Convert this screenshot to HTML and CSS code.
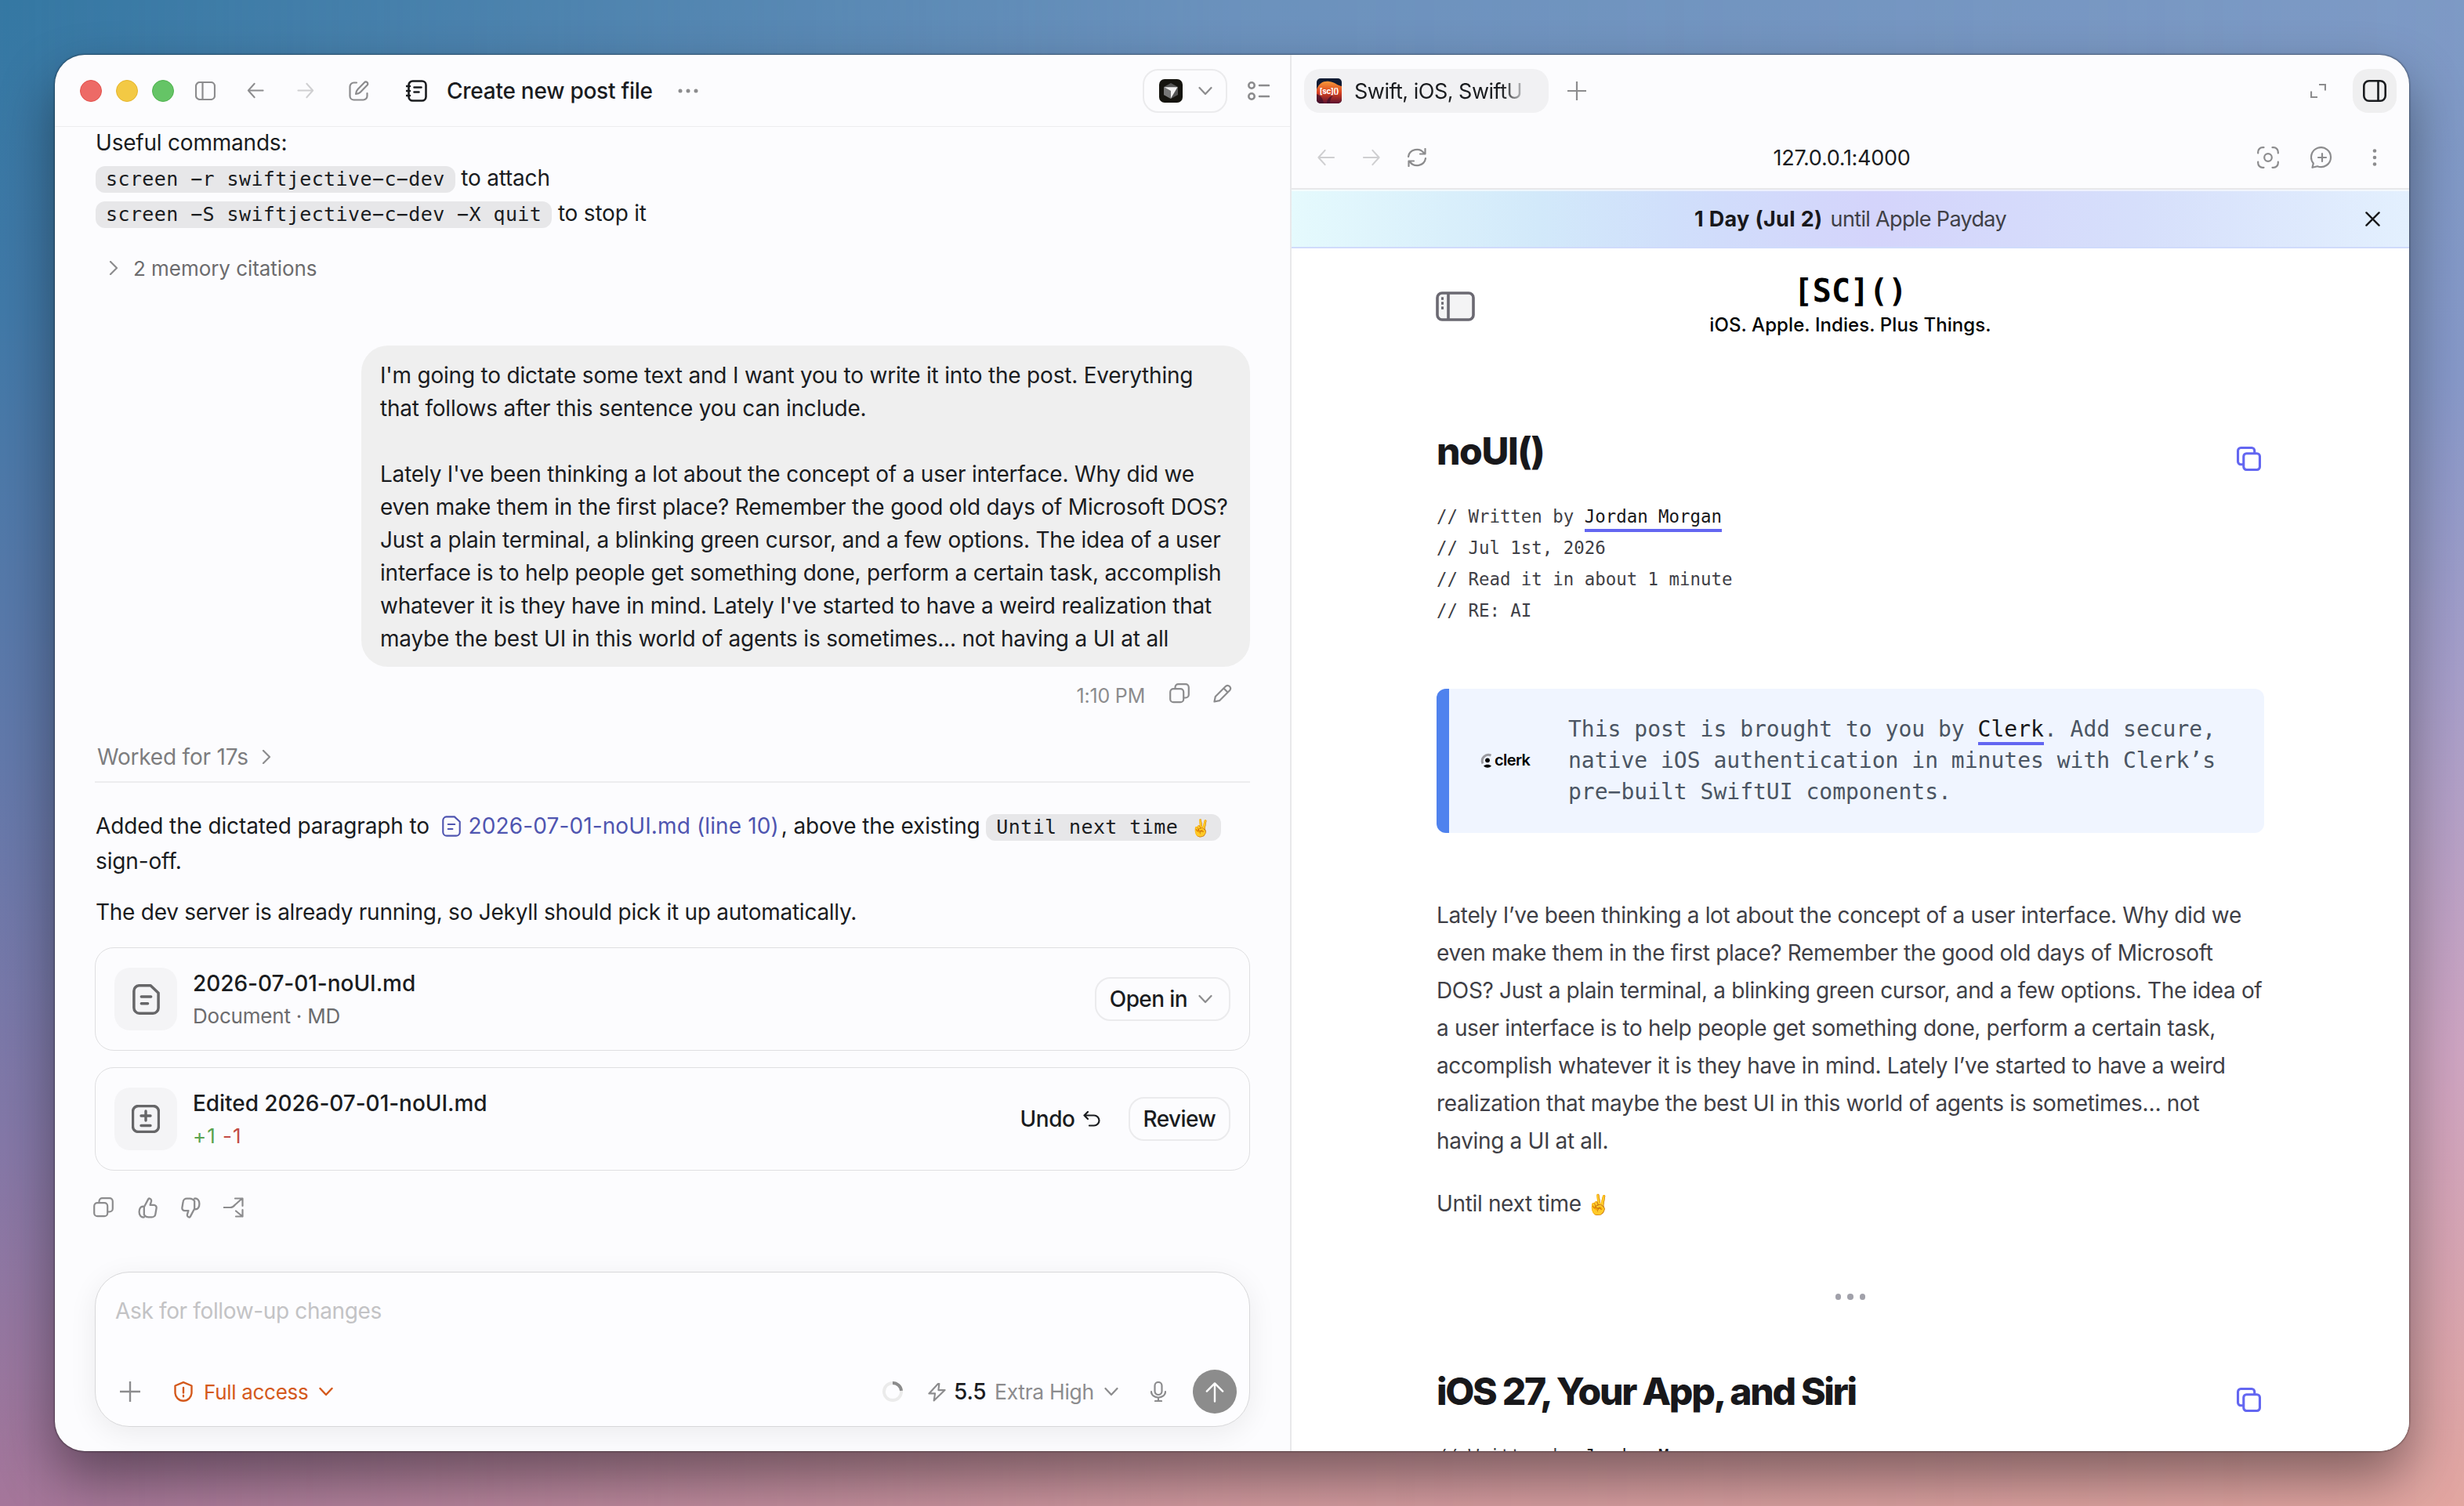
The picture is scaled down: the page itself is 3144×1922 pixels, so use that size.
FILE: index.html
```html
<!DOCTYPE html>
<html lang="en">
<head>
    <meta charset="UTF-8">
    <meta name="viewport" content="width=device-width, initial-scale=1.0">
    <title>Create new post file</title>
    <link rel="stylesheet" href="styles.css">
</head>
<body>
    <!-- Shared icons -->
    <svg class="sprite">
        <symbol id="arrow-left" viewBox="0 0 24 24"><path d="M23 12H1.5M10.5 2L1.5 12l9 10"/></symbol>
        <symbol id="arrow-right" viewBox="0 0 24 24"><path d="M1 12h21.5M13.5 2l9 10-9 10"/></symbol>
        <symbol id="chevron-down" viewBox="0 0 18 18"><path d="M1.5 5L9 13l7.5-8"/></symbol>
        <symbol id="chevron-right" viewBox="0 0 18 18"><path d="M5 1l8 8-8 8"/></symbol>
        <symbol id="plus" viewBox="0 0 24 24"><path d="M12 0v24M0 12h24"/></symbol>
        <symbol id="copy" viewBox="0 0 26 26"><rect x="1.2" y="7.2" width="17" height="17" rx="4"/><path d="M7.5 7V5.2a4 4 0 0 1 4-4h9.300a4 4 0 0 1 4 4v9.300a4 4 0 0 1-4 4h-2.300"/></symbol>
        <symbol id="copy-post" viewBox="0 0 30 30"><rect x="8.500" y="8.500" width="20" height="20" rx="3.500"/><path d="M8 22H5a3.500 3.500 0 0 1-3.500-3.500V5A3.500 3.500 0 0 1 5 1.500h13.500A3.500 3.500 0 0 1 22 5v3"/></symbol>
        <symbol id="doc" viewBox="0 0 34 38"><path d="M8 1.800h14.500l9.700 9.200V29.500a6.700 6.700 0 0 1-6.700 6.700h-17a6.700 6.700 0 0 1-6.700-6.700V8.500A6.700 6.700 0 0 1 8 1.800zM11 15.500h12M11 24h8"/></symbol>
    </svg>

    <div class="window">
        <!-- Chat pane -->
        <section class="chat">
            <header class="chat-header">
                <div class="lights">
                    <span class="light red"></span>
                    <span class="light yellow"></span>
                    <span class="light green"></span>
                </div>
                <svg class="icon i-sidebar" viewBox="0 0 26 24"><rect x="1" y="1" width="24" height="22" rx="5"/><path d="M9.500 1v22"/></svg>
                <svg class="icon i-back"><use href="#arrow-left"/></svg>
                <svg class="icon i-forward faint"><use href="#arrow-right"/></svg>
                <svg class="icon i-compose" viewBox="0 0 26 26"><path d="M10 2.500H6.500a5 5 0 0 0-5 5v12a5 5 0 0 0 5 5h12a5 5 0 0 0 5-5V16M9 17c.3-3 1-4.500 2.500-6L20 2.300a2.400 2.400 0 0 1 3.700 3.200L15 14.500c-1.700 1.700-3 2.200-6 2.500z"/></svg>
                <svg class="icon i-notebook" viewBox="0 0 27 28"><rect x="3.500" y="1.500" width="22" height="25" rx="5"/><path d="M0 8h5M0 14h5M0 20h5M10.500 9.500h9M10.500 15.500h6"/></svg>
                <h1 class="chat-title">Create new post file</h1>
                <svg class="i-more" viewBox="0 0 26 6"><circle cx="3" cy="3" r="2.500"/><circle cx="13" cy="3" r="2.500"/><circle cx="23" cy="3" r="2.500"/></svg>
                <button class="app-picker">
                    <svg class="i-app" viewBox="0 0 30 30">
                        <rect width="30" height="30" rx="7" fill="#15140f"/>
                        <path d="M15 5l9 5v10l-9 5-9-5V10z" fill="#555"/>
                        <path d="M15 15L6 10v10l9 5z" fill="#777"/>
                        <path d="M6.500 10.300h17L15 24.500V15z" fill="#f2f2f2"/>
                    </svg>
                    <svg class="icon i-chevron"><use href="#chevron-down"/></svg>
                </button>
                <svg class="icon i-list" viewBox="0 0 28 24"><circle cx="5" cy="5" r="3.700"/><circle cx="5" cy="19" r="3.700"/><path d="M15 5h12M15 19h12"/></svg>
            </header>

            <div class="thread">
                <p class="text commands">Useful commands:<br><code>screen −r swiftjective−c−dev</code> to attach<br><code>screen −S swiftjective−c−dev −X quit</code> to stop it</p>

                <div class="citations">
                    <svg class="icon i-chevron"><use href="#chevron-right"/></svg>
                    <span>2 memory citations</span>
                </div>

                <div class="bubble">I'm going to dictate some text and I want you to write it into the post. Everything<br>that follows after this sentence you can include.<br><br>Lately I've been thinking a lot about the concept of a user interface. Why did we<br>even make them in the first place? Remember the good old days of Microsoft DOS?<br>Just a plain terminal, a blinking green cursor, and a few options. The idea of a user<br>interface is to help people get something done, perform a certain task, accomplish<br>whatever it is they have in mind. Lately I've started to have a weird realization that<br>maybe the best UI in this world of agents is sometimes... not having a UI at all</div>

                <div class="bubble-meta">
                    <span>1:10 PM</span>
                    <svg class="icon i-copy"><use href="#copy"/></svg>
                    <svg class="icon i-pencil" viewBox="0 0 24 24"><path d="M1.500 22.500l1.300-6.500L16 2.800a3.700 3.700 0 0 1 5.200 5.200L8 21.200zM13.500 5.500l5 5"/></svg>
                </div>

                <div class="worked">
                    <span>Worked for 17s</span>
                    <svg class="icon i-chevron"><use href="#chevron-right"/></svg>
                </div>

                <p class="text reply">Added the dictated paragraph to <a class="file-link" href="#"><svg class="icon i-doc-small"><use href="#doc"/></svg>2026-07-01-noUI.md (line 10)</a>, above the existing <code>Until next time <span class="emoji">✌️</span></code><br>sign-off.</p>
                <p class="text reply-2">The dev server is already running, so Jekyll should pick it up automatically.</p>

                <article class="card">
                    <div class="tile"><svg class="icon i-doc"><use href="#doc"/></svg></div>
                    <div class="card-body">
                        <h3>2026-07-01-noUI.md</h3>
                        <p>Document · MD</p>
                    </div>
                    <button class="pill">Open in <svg class="icon i-chevron"><use href="#chevron-down"/></svg></button>
                </article>

                <article class="card card-2">
                    <div class="tile"><svg class="icon i-diff" viewBox="0 0 36 36"><rect x="1.500" y="1.500" width="33" height="33" rx="7"/><path d="M18 8v12M12 14h12M12 26.500h12"/></svg></div>
                    <div class="card-body">
                        <h3>Edited 2026-07-01-noUI.md</h3>
                        <p class="diff"><span class="added">+1</span> <span class="removed">-1</span></p>
                    </div>
                    <button class="undo">Undo <svg class="icon i-undo" viewBox="0 0 22 20"><path d="M6 1L1.500 5.500 6 10M1.500 5.500H14a6.500 6.500 0 0 1 0 13H8"/></svg></button>
                    <button class="pill">Review</button>
                </article>

                <div class="actions">
                    <svg class="icon i-copy"><use href="#copy"/></svg>
                    <svg class="icon i-thumb" viewBox="0 0 24 26"><path d="M7.500 12L12.500 2.500c.3-.8 1-1.200 1.800-1 1.700.4 2.500 1.900 2 3.700L15 9.500h4.500a3.200 3.200 0 0 1 3.200 3.700l-1.200 7.300a4.500 4.500 0 0 1-4.500 4h-4c-3 0-4-1-5.500-3zM7.500 11.500c-4-1-6 2-6 6.500s2.500 7 6 6.500"/></svg>
                    <svg class="icon i-thumb down" viewBox="0 0 24 26"><path d="M7.500 12L12.500 2.500c.3-.8 1-1.200 1.800-1 1.700.4 2.500 1.900 2 3.700L15 9.500h4.500a3.200 3.200 0 0 1 3.200 3.700l-1.200 7.300a4.500 4.500 0 0 1-4.500 4h-4c-3 0-4-1-5.500-3zM7.500 11.500c-4-1-6 2-6 6.500s2.500 7 6 6.500"/></svg>
                    <svg class="icon i-branch" viewBox="0 0 26 26"><path d="M0 13h9c3 0 4-1 6-3.500L24 1.500M15 1.500h9.500V11M16 17.500l8.500 7M24.500 16v8.500H16"/></svg>
                </div>

                <!-- Composer -->
                <div class="composer">
                    <div class="placeholder">Ask for follow-up changes</div>
                    <div class="composer-bar">
                        <svg class="icon i-plus"><use href="#plus"/></svg>
                        <span class="access">
                            <svg class="icon i-shield" viewBox="0 0 24 26"><path d="M12 1.200l10.500 4.300v8.500c0 6-4.500 10.800-10.500 10.800S1.500 20 1.500 14V5.500zM12 8v6.500M12 18v1.200"/></svg>
                            Full access
                            <svg class="icon i-chevron"><use href="#chevron-down"/></svg>
                        </span>
                        <svg class="spinner" viewBox="0 0 24 24"><circle cx="12" cy="12" r="10.200" stroke="#ebebeb"/><path d="M12 1.800A10.200 10.200 0 0 1 22.200 11" stroke="#8c8c8c"/></svg>
                        <svg class="icon i-bolt" viewBox="0 0 24 24"><path d="M13.500 1L1.500 14h8l-1.500 9.500L22.500 9.500h-8.500L15 1z"/></svg>
                        <span class="model">5.5</span>
                        <span class="effort">Extra High</span>
                        <svg class="icon i-chevron model-chevron"><use href="#chevron-down"/></svg>
                        <svg class="icon i-mic" viewBox="0 0 20 26"><rect x="5.500" y="1" width="9" height="16" rx="4.500"/><path d="M1 13c0 4.500 4 7.500 9 7.500s9-3 9-7.500M10 20.500V25M6 25h8"/></svg>
                        <button class="send"><svg class="icon i-send" viewBox="0 0 26 28"><path d="M13 27V2M2 13L13 2l11 11"/></svg></button>
                    </div>
                </div>
            </div>
        </section>

        <!-- Browser pane -->
        <section class="browser">
            <header class="tabs">
                <div class="tab">
                    <svg class="favicon" viewBox="0 0 32 32">
                        <defs>
                            <linearGradient id="fire" x1="0" y1="0" x2="0" y2="1"><stop offset="0" stop-color="#f79a3a"/><stop offset=".5" stop-color="#d9401f"/><stop offset="1" stop-color="#5d1230"/></linearGradient>
                            <clipPath id="round"><rect width="32" height="32" rx="5"/></clipPath>
                        </defs>
                        <g clip-path="url(#round)">
                            <rect width="32" height="32" fill="#101b33"/>
                            <path d="M0 14C3 6 9 3 16 4c8 1 10 5 16 6v22H0z" fill="url(#fire)"/>
                            <path d="M0 20c6 2 8 6 9 12H0zM13 32c0-5 3-9 8-10-3 3-4 6-4 10z" fill="#3a0f2c" opacity=".7"/>
                        </g>
                        <text x="16" y="20" text-anchor="middle">[sc]()</text>
                    </svg>
                    <span class="tab-title">Swift, iOS, SwiftU</span>
                </div>
                <svg class="icon i-newtab"><use href="#plus"/></svg>
                <svg class="icon i-expand" viewBox="0 0 20 18"><path d="M11 1h8v7.500M1 9.500V17h8"/></svg>
                <button class="panel-btn"><svg class="icon i-panel" viewBox="0 0 30 28"><rect x="1.300" y="1.300" width="27.400" height="25.400" rx="6.500"/><path d="M19.500 1.500v25"/></svg></button>
            </header>

            <div class="toolbar">
                <div class="nav">
                    <svg class="icon i-nav faint"><use href="#arrow-left"/></svg>
                    <svg class="icon i-nav faint"><use href="#arrow-right"/></svg>
                    <svg class="icon i-reload" viewBox="0 0 24 24"><path d="M1 11A11 10.500 0 0 1 21 6.500M23 13A11 10.500 0 0 1 3 17.500M22.500 1v6.500H16M1.500 23v-6.500H8"/></svg>
                </div>
                <div class="url">127.0.0.1:4000</div>
                <div class="tools">
                    <svg class="icon i-capture" viewBox="0 0 28 28"><path d="M1.200 8.500V7a5.800 5.800 0 0 1 5.800-5.800h1.500M19.500 1.200H21A5.800 5.800 0 0 1 26.800 7v1.500M26.800 19.500V21a5.800 5.800 0 0 1-5.800 5.800h-1.500M8.500 26.800H7A5.800 5.800 0 0 1 1.200 21v-1.500"/><circle cx="14" cy="14" r="4.800"/></svg>
                    <svg class="icon i-comment" viewBox="0 0 30 28"><path d="M2.500 26.800l1.300-5.300A12.500 12.500 0 1 1 9 25.300zM15 9v10M10 14h10"/></svg>
                    <svg class="i-kebab" viewBox="0 0 6 22"><circle cx="3" cy="2.500" r="2.300"/><circle cx="3" cy="11" r="2.300"/><circle cx="3" cy="19.500" r="2.300"/></svg>
                </div>
            </div>

            <div class="banner">
                <span class="banner-text"><b>1 Day (Jul 2)</b><span class="until">until Apple Payday</span></span>
                <svg class="icon i-close" viewBox="0 0 20 20"><path d="M1.500 1.500l17 17M18.500 1.500l-17 17"/></svg>
            </div>

            <main class="site">
                <header class="site-header">
                    <svg class="i-menu" viewBox="0 0 50 38"><rect x="2" y="2" width="46" height="34" rx="6" fill="#f4f4f5"/><path d="M16 2v34M7 9h3M7 15h3M7 21h3"/></svg>
                    <div class="brand">
                        <div class="logo">[SC]()</div>
                        <div class="tagline">iOS. Apple. Indies. Plus Things.</div>
                    </div>
                </header>

                <article class="post">
                    <div class="post-head">
                        <h2>noUI()</h2>
                        <svg class="i-copy-post"><use href="#copy-post"/></svg>
                    </div>
                    <div class="meta">// Written by <a href="#">Jordan Morgan</a><br>// Jul 1st, 2026<br>// Read it in about 1 minute<br>// RE: AI</div>

                    <aside class="sponsor">
                        <svg class="clerk" viewBox="0 0 64 20">
                            <path d="M13.500 3.200A7.800 7.800 0 0 0 3 13.500" fill="none" stroke="#9a9aa0" stroke-width="3"/>
                            <circle cx="9" cy="9.300" r="2.900"/>
                            <path d="M4 16.500c3-2.500 7-2.500 10 0-3 3-7 3-10 0z"/>
                            <text x="18" y="16" textLength="46">clerk</text>
                        </svg>
                        <p>This post is brought to you by <a href="#">Clerk</a>. Add secure,<br>native iOS authentication in minutes with Clerk’s<br>pre−built SwiftUI components.</p>
                    </aside>

                    <p class="body-text">Lately I’ve been thinking a lot about the concept of a user interface. Why did we<br>even make them in the first place? Remember the good old days of Microsoft<br>DOS? Just a plain terminal, a blinking green cursor, and a few options. The idea of<br>a user interface is to help people get something done, perform a certain task,<br>accomplish whatever it is they have in mind. Lately I’ve started to have a weird<br>realization that maybe the best UI in this world of agents is sometimes… not<br>having a UI at all.</p>
                    <p class="body-text sign-off">Until next time <span class="emoji">✌️</span></p>
                </article>

                <div class="dots"><span></span><span></span><span></span></div>

                <article class="post-next">
                    <div class="post-head">
                        <h2 class="long">iOS 27, Your App, and Siri</h2>
                        <svg class="i-copy-post"><use href="#copy-post"/></svg>
                    </div>
                    <div class="meta">// Written by <a href="#">Jordan Morgan</a></div>
                </article>
            </main>
        </section>
    </div>
</body>
</html>
```
FILE: styles.css
```css
* {
    box-sizing: border-box;
}

body {
    margin: 0;
    width: 3144px;
    height: 1922px;
    padding: 70px;
    overflow: hidden;
    position: relative;
    font-family: Inter, "Liberation Sans", sans-serif;
    font-size: 28px;
    color: #1a1c1f;
    background: linear-gradient(180deg, #3578a3 0%, #4079a8 20%, #6279ab 50%, #8578a8 76%, #a5769a 100%);
}

/* Second vertical gradient, faded in towards the right */
body::before {
    content: "";
    position: absolute;
    inset: 0;
    background: linear-gradient(180deg, #7d9ac5 0%, #8799c9 25%, #a79fca 45%, #cfa5c2 70%, #e2a6a0 100%);
    -webkit-mask-image: linear-gradient(90deg, transparent 0%, rgba(0, 0, 0, 0.75) 50%, #000 100%);
    mask-image: linear-gradient(90deg, transparent 0%, rgba(0, 0, 0, 0.75) 50%, #000 100%);
}

h1, h2, h3, p {
    margin: 0;
    font-size: inherit;
    font-weight: 400;
}

button {
    font: inherit;
    color: inherit;
    letter-spacing: inherit;
    background: none;
    border: none;
    padding: 0;
}

a {
    color: inherit;
    text-decoration: none;
}

svg {
    flex: none;
    display: block;
}

.sprite {
    display: none;
}

.icon {
    fill: none;
    stroke: #8c8c8e;
    stroke-width: 2.2;
    stroke-linecap: round;
    stroke-linejoin: round;
}

.faint {
    stroke: #cfcfd1;
}

.i-chevron {
    width: 18px;
    height: 18px;
}

.window {
    position: relative;
    display: flex;
    width: 3004px;
    height: 1782px;
    border-radius: 38px;
    overflow: hidden;
    background: #fcfcfe;
    box-shadow: 0 0 2px 1px rgba(0, 0, 0, 0.35), 0 34px 70px rgba(0, 0, 0, 0.42);
}

/* ---------- Chat pane ---------- */
.chat {
    width: 1578px;
    display: flex;
    flex-direction: column;
    border-right: 2px solid #e8e8ea;
    white-space: nowrap;
    letter-spacing: -0.21px;
}

.chat-header {
    display: flex;
    align-items: center;
    height: 92px;
    padding-left: 32px;
    border-bottom: 1px solid #ededef;
}

.lights {
    display: flex;
    gap: 18px;
}

.light {
    width: 28px;
    height: 28px;
    border-radius: 50%;
}

.red {
    background: #ed6a66;
    border: 1px solid #e2504c;
}

.yellow {
    background: #f3c944;
    border: 1px solid #e5b52d;
}

.green {
    background: #65c466;
    border: 1px solid #4fb24f;
}

.i-sidebar {
    width: 26px;
    height: 24px;
    margin-left: 27px;
}

.i-back {
    width: 24px;
    height: 21px;
    margin-left: 39px;
}

.i-forward {
    width: 24px;
    height: 21px;
    margin-left: 40px;
}

.i-compose {
    width: 26px;
    height: 26px;
    margin-left: 43px;
}

.i-notebook {
    width: 27px;
    height: 28px;
    margin-left: 47px;
    stroke: #1a1c1f;
    stroke-width: 2.6;
}

.chat-title {
    width: 264px;
    margin-left: 25px;
    font-weight: 500;
    letter-spacing: -0.25px;
}

.i-more {
    width: 26px;
    height: 6px;
    margin-left: 31px;
    fill: #8c8c8e;
}

.app-picker {
    display: flex;
    align-items: center;
    gap: 20px;
    width: 108px;
    height: 56px;
    margin-left: auto;
    padding-left: 19px;
    border: 2px solid #ebebed;
    border-radius: 20px;
}

.i-app {
    width: 30px;
    height: 30px;
}

.i-list {
    width: 28px;
    height: 24px;
    margin: 0 26px;
    stroke-width: 2.6;
}

.thread {
    flex: 1;
    display: flex;
    flex-direction: column;
    padding: 0 51px 31px;
}

.text {
    padding-left: 1px;
    line-height: 45px;
}

.commands {
    margin-top: -2px;
}

code {
    display: inline-block;
    height: 34px;
    padding: 0 13px;
    border-radius: 12px;
    background: #e7e7e9;
    font-family: "DejaVu Sans Mono", monospace;
    font-size: 25px;
    line-height: 34px;
    letter-spacing: 0.4px;
}

code .emoji {
    font-size: 21px;
    letter-spacing: 0;
}

.citations {
    display: flex;
    align-items: center;
    gap: 16px;
    height: 40px;
    margin-top: 27px;
    padding-left: 15px;
    color: #6c6c6e;
    font-size: 26px;
    letter-spacing: -0.05px;
}

.bubble {
    align-self: flex-end;
    width: 1134px;
    margin-top: 79px;
    padding: 17px 24px 15px;
    border-radius: 34px;
    background: #efefef;
    line-height: 42px;
}

.bubble-meta {
    display: flex;
    align-items: center;
    justify-content: flex-end;
    height: 40px;
    margin-top: 17px;
    padding-right: 23px;
    color: #8c8c8e;
    font-size: 25px;
}

.i-copy {
    width: 26px;
    height: 26px;
}

.bubble-meta .i-copy {
    margin: -6px 30px 0 31px;
}

.i-pencil {
    width: 24px;
    height: 24px;
    margin-top: -6px;
}

.worked {
    display: flex;
    align-items: center;
    gap: 14px;
    margin-top: 38px;
    padding: 0 0 11px 3px;
    border-bottom: 2px solid #ededef;
    color: #7d7d7f;
    line-height: 40px;
}

.reply {
    margin-top: 33px;
    letter-spacing: -0.14px;
}

.reply-2 {
    margin-top: 20px;
    letter-spacing: -0.26px;
}

.file-link {
    margin-left: 8px;
    margin-right: 3px;
    color: #4f55b0;
    letter-spacing: 0.12px;
}

.i-doc-small {
    display: inline-block;
    width: 24px;
    height: 27px;
    margin-right: 10px;
    vertical-align: -4px;
    stroke: #4f55b0;
    stroke-width: 3;
}

.card {
    display: flex;
    align-items: center;
    height: 132px;
    margin-top: 22px;
    padding: 0 24px;
    border: 1px solid #dfdfe1;
    border-radius: 24px;
}

.card-2 {
    margin-top: 21px;
}

.tile {
    display: flex;
    align-items: center;
    justify-content: center;
    width: 80px;
    height: 80px;
    margin-right: 20px;
    border-radius: 20px;
    background: #f4f4f6;
}

.tile .icon {
    stroke: #666668;
    stroke-width: 3.4;
}

.i-doc {
    width: 35px;
    height: 39px;
}

.i-diff {
    width: 36px;
    height: 36px;
}

.card-body {
    flex: 1;
    padding-top: 2px;
    line-height: 41px;
}

.card-body h3 {
    font-weight: 500;
    letter-spacing: -0.05px;
}

.card-body p {
    color: #6c6c6e;
    font-size: 26px;
}

.card-body .diff {
    letter-spacing: 1px;
}

.card-body .added {
    color: #59a34f;
}

.card-body .removed {
    color: #c24b45;
}

.pill {
    display: flex;
    align-items: center;
    gap: 14px;
    height: 56px;
    padding: 0 17px;
    border: 2px solid #ebebed;
    border-radius: 20px;
    font-weight: 500;
    letter-spacing: -0.6px;
}

.pill .i-chevron {
    margin-right: 4px;
}

.undo {
    display: flex;
    align-items: center;
    gap: 10px;
    margin-right: 36px;
    font-weight: 500;
    letter-spacing: -0.4px;
}

.i-undo {
    width: 22px;
    height: 20px;
    stroke: #1a1c1f;
}

.actions {
    display: flex;
    align-items: center;
    gap: 30.5px;
    height: 32px;
    margin-top: 31px;
    margin-left: -2px;
}

.i-thumb {
    width: 25px;
    height: 27px;
}

.down {
    transform: rotate(180deg);
}

.i-branch {
    width: 26px;
    height: 26px;
    margin-left: -2px;
}

.composer {
    height: 198px;
    margin-top: auto;
    padding: 29px 16px 0 25px;
    border: 1px solid #d8d8da;
    border-radius: 44px;
    background: #fdfdff;
    box-shadow: 0 8px 36px rgba(0, 0, 0, 0.07);
}

.placeholder {
    line-height: 40px;
    letter-spacing: -0.35px;
    color: #c3c3c5;
}

.composer-bar {
    display: flex;
    align-items: center;
    height: 56px;
    margin-top: 55px;
    padding-left: 6px;
}

.i-plus {
    width: 26px;
    height: 26px;
}

.access {
    display: flex;
    align-items: center;
    gap: 14px;
    margin-left: 43px;
    color: #d4591c;
    font-size: 26px;
    letter-spacing: -0.3px;
}

.access .icon {
    stroke: #d4591c;
    stroke-width: 2.4;
}

.i-shield {
    width: 24px;
    height: 26px;
}

.spinner {
    width: 26px;
    height: 26px;
    margin-left: auto;
    fill: none;
    stroke-width: 3.6;
}

.i-bolt {
    width: 23px;
    height: 25px;
    margin-left: 32px;
}

.model {
    width: 40px;
    margin-left: 10px;
    font-weight: 500;
}

.effort {
    width: 127px;
    margin-left: 12px;
    color: #8c8c8e;
    font-size: 26.5px;
    letter-spacing: -0.3px;
}

.model-chevron {
    margin-left: 13px;
}

.i-mic {
    width: 20px;
    height: 26px;
    margin-left: 41px;
}

.send {
    display: flex;
    align-items: center;
    justify-content: center;
    width: 56px;
    height: 56px;
    margin-left: 34px;
    border-radius: 50%;
    background: #8c8c8c;
}

.i-send {
    width: 24px;
    height: 27px;
    stroke: #fff;
    stroke-width: 2.6;
}

/* ---------- Browser pane ---------- */
.browser {
    width: 1426px;
    display: flex;
    flex-direction: column;
    white-space: nowrap;
    letter-spacing: -0.3px;
}

.tabs {
    display: flex;
    align-items: center;
    height: 92px;
    padding: 0 16px;
}

.tab {
    display: flex;
    align-items: center;
    width: 312px;
    height: 56px;
    padding-left: 16px;
    border-radius: 20px;
    background: #f1f1f3;
}

.favicon {
    width: 32px;
    height: 32px;
}

.favicon text {
    fill: #fff;
    font-size: 10px;
    font-weight: 700;
}

.tab-title {
    margin-left: 16px;
    font-size: 27px;
    letter-spacing: -0.5px;
    -webkit-mask-image: linear-gradient(90deg, #000 88%, rgba(0, 0, 0, 0.25) 100%);
    mask-image: linear-gradient(90deg, #000 88%, rgba(0, 0, 0, 0.25) 100%);
}

.i-newtab {
    width: 24px;
    height: 24px;
    margin-left: 24px;
}

.i-expand {
    width: 20px;
    height: 18px;
    margin-left: auto;
    stroke-linecap: butt;
    stroke-linejoin: miter;
}

.panel-btn {
    display: flex;
    align-items: center;
    justify-content: center;
    width: 56px;
    height: 56px;
    margin-left: 34px;
    border-radius: 20px;
    background: #efeff0;
}

.i-panel {
    width: 30px;
    height: 28px;
    stroke: #1a1c1f;
    stroke-width: 2.6;
}

.toolbar {
    display: grid;
    grid-template-columns: 280px 1fr 280px;
    align-items: center;
    height: 80px;
    border-bottom: 2px solid #e8e8ea;
}

.nav {
    display: flex;
    align-items: center;
    gap: 34px;
    padding-left: 32px;
}

.i-nav {
    width: 24px;
    height: 22px;
}

.i-reload {
    width: 24px;
    height: 24px;
}

.url {
    padding-right: 22px;
    text-align: center;
    font-size: 27px;
}

.tools {
    display: flex;
    align-items: center;
    justify-content: flex-end;
    padding-right: 41px;
}

.i-capture {
    width: 28px;
    height: 28px;
}

.i-comment {
    width: 30px;
    height: 28px;
    margin: 0 49px 0 40px;
}

.i-kebab {
    width: 6px;
    height: 22px;
    fill: #8c8c8e;
}

.banner {
    display: flex;
    align-items: center;
    height: 75px;
    padding-right: 37px;
    border-top: 2px solid rgba(255, 255, 255, 0.6);
    border-bottom: 2px solid #d0dbfb;
    background: linear-gradient(90deg, #e5fafd 0%, #d2e9fa 22%, #d0dffb 34%, #d4d4fb 52%, #d6dffb 76%, #e3f0fe 100%);
    font-size: 27px;
    color: #18181b;
}

.banner-text {
    flex: 1;
    padding-left: 56px;
    text-align: center;
}

.banner-text b {
    letter-spacing: 0.35px;
}

.until {
    margin-left: 10px;
    color: #3f3f46;
    letter-spacing: -0.65px;
}

.i-close {
    width: 19px;
    height: 19px;
    stroke: #18181b;
    stroke-width: 2.5;
}

.site {
    flex: 1;
    padding: 30px 185px 0;
    background: #fff;
    overflow: hidden;
}

.site-header {
    display: grid;
    grid-template-columns: 50px 1fr 50px;
    align-items: center;
    height: 83px;
}

.i-menu {
    width: 50px;
    height: 38px;
    margin: 3px 0 0 -1px;
    fill: none;
    stroke: #6b6972;
    stroke-width: 3.6;
}

.brand {
    text-align: center;
    color: #000;
}

.logo {
    font-family: "DejaVu Sans Mono", monospace;
    font-size: 40px;
    font-weight: 700;
    letter-spacing: 0;
    line-height: 48px;
}

.tagline {
    margin-top: 4px;
    font-size: 24px;
    font-weight: 500;
    letter-spacing: 0.08px;
    line-height: 32px;
}

.post {
    margin-top: 115px;
}

.post-head {
    display: flex;
    align-items: center;
    justify-content: space-between;
    height: 60px;
    padding-right: 4px;
}

.post-head h2 {
    font-size: 48px;
    font-weight: 800;
    letter-spacing: -1.4px;
    color: #18181b;
}

.post-head .long {
    letter-spacing: -2.3px;
}

.i-copy-post {
    width: 31px;
    height: 31px;
    margin-top: 21px;
    fill: none;
    stroke: #6366f1;
    stroke-width: 3;
}

.meta {
    margin-top: 34px;
    font-family: "DejaVu Sans Mono", monospace;
    font-size: 22.4px;
    letter-spacing: 0;
    line-height: 40px;
    color: #3f3f46;
}

.meta a {
    padding-bottom: 3px;
    border-bottom: 4px solid #6366f1;
    color: #18181b;
}

.sponsor {
    display: flex;
    align-items: center;
    height: 184px;
    margin-top: 80px;
    padding-left: 40px;
    border-left: 16px solid #4f82ee;
    border-radius: 12px;
    background: #f0f5ff;
    font-family: "DejaVu Sans Mono", monospace;
    letter-spacing: 0;
    line-height: 40px;
    color: #4b5563;
}

.sponsor p {
    margin-left: 48px;
}

.sponsor a {
    border-bottom: 4px solid #6366f1;
    color: #18181b;
}

.clerk {
    width: 64px;
    height: 20px;
    overflow: visible;
}

.clerk text {
    font-family: Inter, sans-serif;
    font-size: 20px;
    font-weight: 600;
}

.body-text {
    margin-top: 81px;
    line-height: 48px;
    letter-spacing: -0.35px;
    color: #3f3f46;
}

.body-text .emoji {
    font-size: 25px;
    margin-left: -1px;
}

.sign-off {
    margin-top: 32px;
}

.dots {
    display: flex;
    justify-content: center;
    gap: 8px;
    margin-top: 90px;
}

.dots span {
    width: 7.5px;
    height: 7.5px;
    border-radius: 50%;
    background: #a1a1aa;
}

.post-next {
    margin-top: 87px;
}

.post-next .meta {
    margin-top: 32px;
}
```
